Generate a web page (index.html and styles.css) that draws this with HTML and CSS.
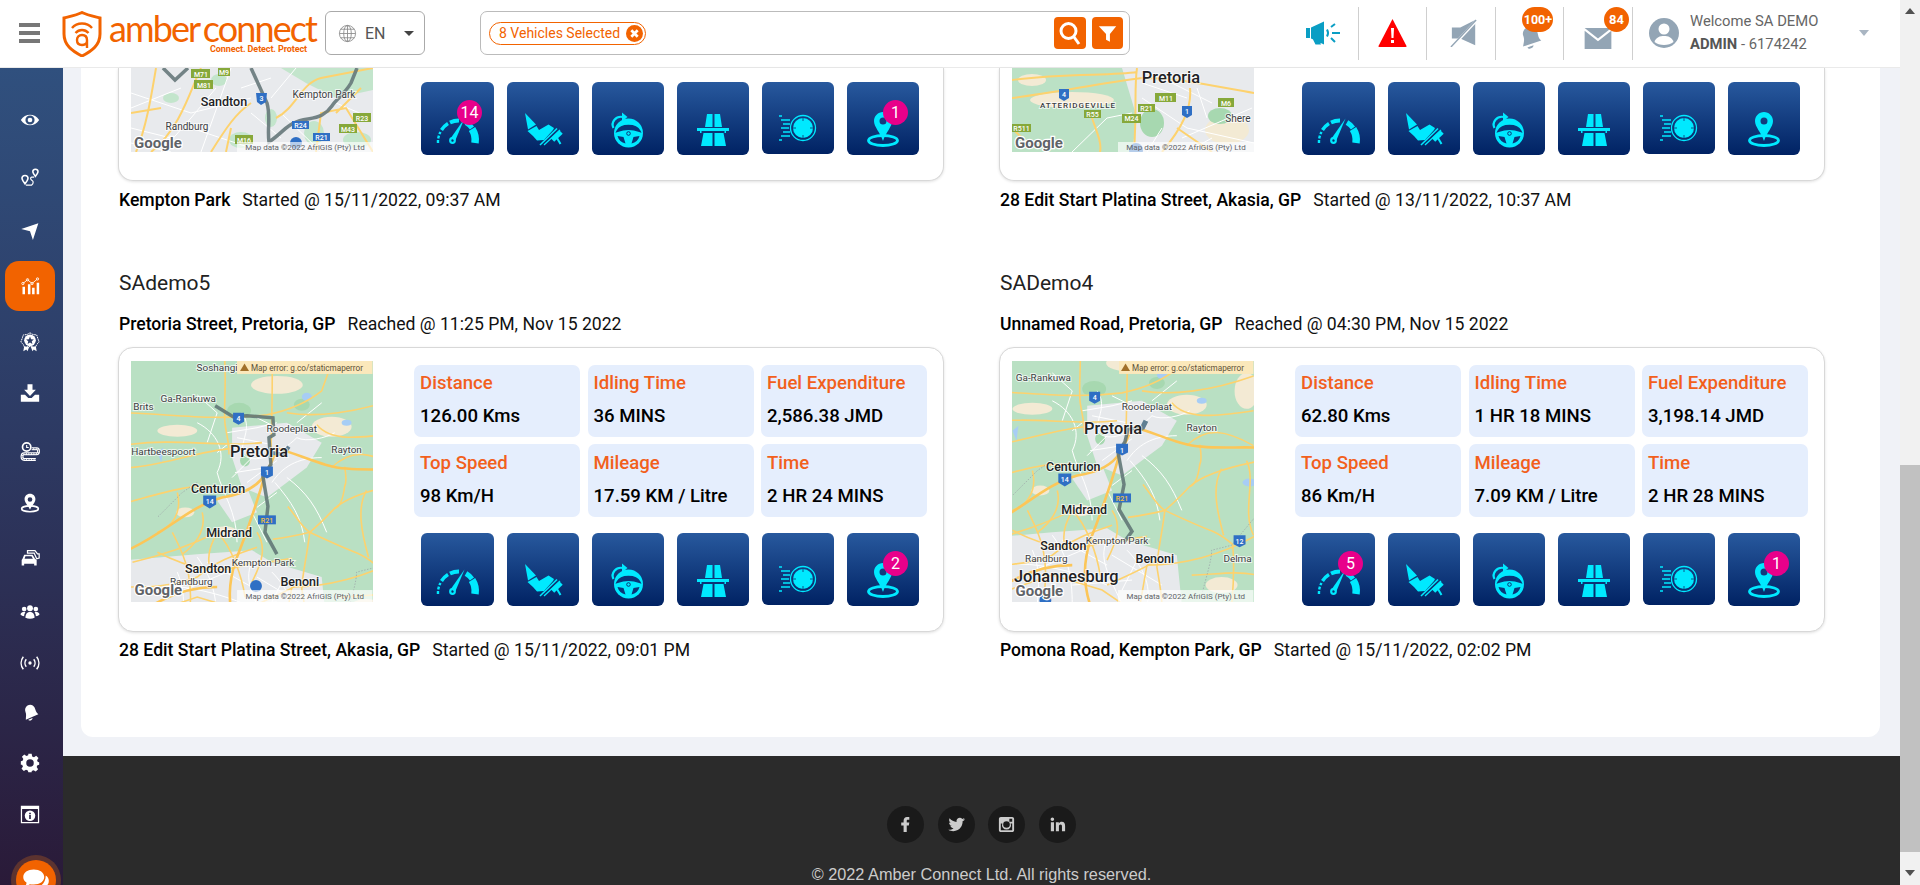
FILE: index.html
```html
<!DOCTYPE html>
<html lang="en">
<head>
<meta charset="utf-8">
<title>Amber Connect</title>
<link rel="stylesheet" href="styles.css">
</head>
<body>
<svg class="sprite" aria-hidden="true">
<defs>
<!-- trip buttons, drawn in button coordinates -->
<symbol id="t-gauge" viewBox="0 0 73 73">
<g fill="none" stroke="currentColor">
<path d="M17 61A20 20 0 0 1 19.500 50" stroke-width="2.400" stroke-dasharray="3 1.500"/>
<path d="M20.500 48A20 20 0 0 1 27 41.500" stroke-width="3.500"/>
<path d="M29 40.500A20 20 0 0 1 38 38.500" stroke-width="4"/>
<path d="M45 40.500A20 20 0 0 1 51 46" stroke-width="5"/>
<path d="M51 47A20 20 0 0 1 54 61" stroke-width="7.500"/>
<circle cx="31.500" cy="58.500" r="2.300" stroke-width="2.200"/>
</g>
<path d="M29.500 56.500L43.500 36.500L34.500 58Z" fill="currentColor"/>
</symbol>
<symbol id="t-pedal" viewBox="0 0 73 73">
<g fill="currentColor">
<path d="M18 31L29 42.500L21 47.500Z"/>
<path d="M20.500 49L29.500 44L32 48L41.500 42.500L47 46L46 48L37 58L30 58.500L26 54Z"/>
</g>
<g fill="none" stroke="currentColor">
<path d="M33 63L50 46.500" stroke-width="1.600"/>
<path d="M37 63L53 48" stroke-width="1.300"/>
<path d="M45.500 58L54 50" stroke-width="5"/>
<path d="M50 56L53.500 62" stroke-width="2"/>
</g>
</symbol>
<symbol id="t-wheel" viewBox="0 0 73 73">
<circle cx="36.500" cy="51" r="14.500" fill="currentColor"/>
<path d="M25.500 49C29 42 44 42 47.500 49C41 46.500 32 46.500 25.500 49Z" fill="#0a3578" stroke="#0a3578" stroke-width="2"/>
<path d="M25.500 54L31.500 55L33.500 61.500C29.500 60.500 26.500 58 25.500 54ZM47.500 54L41.500 55L39.500 61.500C43.500 60.500 46.500 58 47.500 54Z" fill="#0a3578"/>
<circle cx="36.500" cy="51.500" r="1.800" fill="none" stroke="#0a3578" stroke-width="1"/>
<path d="M21.500 46C18.500 40 24 33.500 31 35" fill="none" stroke="currentColor" stroke-width="2.200"/>
<path d="M30 30.500L35.500 35L30 39.500Z" fill="currentColor"/>
</symbol>
<symbol id="t-road" viewBox="0 0 73 73">
<path d="M30 32H35.500V45H28ZM37.500 32H43L45 45H37.500ZM20 46H52V49H49V51H47.500V49H24.500V51H23V49H20ZM26.500 51H35.500V64H24ZM37.500 51H46.500L49 64H37.500Z" fill="currentColor"/>
</symbol>
<symbol id="t-tyre" viewBox="0 0 73 73">
<circle cx="41" cy="46" r="12.500" fill="none" stroke="currentColor" stroke-width="1.300"/>
<circle cx="41" cy="46" r="10" fill="currentColor"/>
<g stroke="#0a3070" stroke-width=".8"><path d="M41 36v3M41 53v3M31 46h3M48 46h3"/></g>
<g stroke="currentColor" stroke-width="1.500"><path d="M17 34h3M19 38h9M21 42h7M19 46h8M21 50h7M19 54h9M17 58h3"/></g>
</symbol>
<symbol id="t-pin" viewBox="0 0 73 73">
<ellipse cx="36" cy="58.500" rx="14.500" ry="5" fill="none" stroke="currentColor" stroke-width="2.800"/>
<path fill-rule="evenodd" d="M36 30C41 30 45 34 45 39C45 45 39 50 36 59C33 50 27 45 27 39C27 34 31 30 36 30ZM36 35.500A3.500 3.500 0 1 0 36 42.500A3.500 3.500 0 1 0 36 35.500Z" fill="currentColor"/>
</symbol>
<!-- sidebar -->
<symbol id="s-eye" viewBox="0 0 24 24"><path fill-rule="evenodd" d="M1 12C6 3.500 18 3.500 23 12C18 20.500 6 20.500 1 12ZM12 6.500A5.500 5.500 0 1 0 12 17.500A5.500 5.500 0 1 0 12 6.500Z" fill="currentColor"/><circle cx="12" cy="12" r="2.800" fill="currentColor"/></symbol>
<symbol id="s-route" viewBox="0 0 24 24"><g fill="none" stroke="currentColor" stroke-width="2"><path d="M6 9C3.500 9 2 11 2.500 13C3 15 6 19 6 19C6 19 9 15 9.500 13C10 11 8.500 9 6 9Z"/><path d="M18.500 1.500C16.500 1.500 15 3 15.500 5C16 7 18.500 10 18.500 10C18.500 10 21 7 21.500 5C22 3 20.500 1.500 18.500 1.500Z"/><path d="M17 11H14C12 11.500 12.500 14 14.500 15C16.500 16 16 19 14 20.500H7" stroke-width="1.400"/></g></symbol>
<symbol id="s-nav" viewBox="0 0 24 24"><path d="M1.500 8.500L22 1.500L15.500 21.500L12 11Z" fill="currentColor"/></symbol>
<symbol id="s-chart" viewBox="0 0 24 24"><g fill="currentColor"><path d="M3 13h3v9H3zM9.500 10h3v12h-3zM14.500 14h3v8h-3zM20 8h3v14h-3z"/></g><path d="M3.500 9L9 4.500L14.500 9L21 3.500" fill="none" stroke="currentColor" stroke-width="1"/><g fill="none" stroke="currentColor"><circle cx="3.500" cy="9" r="1.400"/><circle cx="9" cy="4.500" r="1.400"/><circle cx="14.500" cy="9" r="1.400"/><circle cx="21" cy="3.500" r="1.400"/></g></symbol>
<symbol id="s-award" viewBox="0 0 24 24"><path d="M12 1L15.500 3L20 3.500L21.500 8L23 12L20 15L18 20L15 17.500H9L6 20L4 15L1 12L2.500 8L4 3.500L8.500 3Z" fill="none" stroke="currentColor" stroke-width="1.200" stroke-dasharray="2 .8"/><circle cx="12" cy="10" r="7" fill="currentColor"/><path d="M12 5.500L13.300 8.700L16.700 9L14.100 11.200L14.900 14.500L12 12.700L9.100 14.500L9.900 11.200L7.300 9L10.700 8.700Z" fill="#2f3f68"/><path d="M5 17L4 23L7.500 21L9 23L11 18ZM19 17L20 23L16.500 21L15 23L13 18Z" fill="currentColor"/></symbol>
<symbol id="s-down" viewBox="0 0 24 24"><path d="M9 1.500H15V8H19L12 15.500L5 8H9Z" fill="currentColor"/><path d="M1 14H6L10 18H14L18 14H23V22.500H1Z" fill="currentColor"/></symbol>
<symbol id="s-trail" viewBox="0 0 24 24"><circle cx="8" cy="6" r="5" fill="none" stroke="currentColor" stroke-width="2"/><path d="M8 3.500V6.500H10.500" fill="none" stroke="currentColor" stroke-width="1.300"/><path d="M14 8H20C23 8 23 14 20 14H5C1.500 14 1.500 21 5 21H19" fill="none" stroke="currentColor" stroke-width="3.500"/><path d="M14 8H20C23 8 23 14 20 14H5C1.500 14 1.500 21 5 21H19" fill="none" stroke="#2d3a60" stroke-width=".9" stroke-dasharray="2 1"/></symbol>
<symbol id="s-pin" viewBox="0 0 24 24"><ellipse cx="12" cy="19" rx="10" ry="3.500" fill="none" stroke="currentColor" stroke-width="2"/><path fill-rule="evenodd" d="M12 1C16 1 18.500 4 18.500 7.500C18.500 12 14 15 12 20C10 15 5.500 12 5.500 7.500C5.500 4 8 1 12 1ZM12 5A2.800 2.800 0 1 0 12 10.600A2.800 2.800 0 1 0 12 5Z" fill="currentColor"/></symbol>
<symbol id="s-cars" viewBox="0 0 24 24"><path d="M9 3H18L21 7H23V12L20 13L17 6H9Z" fill="none" stroke="currentColor" stroke-width="1.500"/><path fill-rule="evenodd" d="M5 8H15L18 13L20 14.500V21H17V19H5V21H2V14.500L3 13ZM6.500 10L5.500 13H15.500L13.800 10Z" fill="currentColor"/></symbol>
<symbol id="s-users" viewBox="0 0 24 24"><g fill="currentColor"><circle cx="12" cy="7.500" r="3.500"/><circle cx="5" cy="8.500" r="2.800"/><circle cx="19" cy="8.500" r="2.800"/><path d="M6.500 19C6.500 14 9 12 12 12C15 12 17.500 14 17.500 19C14 20.500 10 20.500 6.500 19Z"/><path d="M0.500 15C1 12.500 3 12 5 12C5.500 12 6 12.200 6.500 12.500C5.500 13.500 5 15 5 17C3 17 1.500 16 .5 15ZM23.500 15C23 12.500 21 12 19 12C18.500 12 18 12.200 17.500 12.500C18.500 13.500 19 15 19 17C21 17 22.500 16 23.500 15Z"/></g></symbol>
<symbol id="s-signal" viewBox="0 0 24 24"><circle cx="12" cy="12" r="2" fill="currentColor"/><g fill="none" stroke="currentColor" stroke-width="1.800"><path d="M7.500 7.500C5.500 10 5.500 14 7.500 16.500M16.500 7.500C18.500 10 18.500 14 16.500 16.500"/><path d="M4 4.500C.5 9 .5 15 4 19.500M20 4.500C23.500 9 23.500 15 20 19.500"/></g></symbol>
<symbol id="s-bell" viewBox="0 0 24 24"><path d="M9 3C12 1 16 2 17.500 5.500C19 9 19 11 22 13.500L7 20C7 16 8 14 6.500 10.500C5.500 8 6.500 4.500 9 3ZM10 20L15 18C15.500 20.500 11 22.500 10 20Z" fill="currentColor"/></symbol>
<symbol id="s-gear" viewBox="0 0 24 24"><path fill-rule="evenodd" d="M10 1H14L14.600 4.100L16.800 5L19.400 3.300L22.200 6.100L20.500 8.700L21.400 10.900L23 11V14L20.900 14.700L20 16.900L21.700 19.500L18.900 22.300L16.300 20.600L14.100 21.500L14 23H10L9.400 20.900L7.200 20L4.600 21.700L1.800 18.900L3.500 16.300L2.600 14.100L1 14V10L3.100 9.400L4 7.200L2.300 4.600L5.100 1.800L7.700 3.500L9.900 2.600ZM12 7.500A4.500 4.500 0 1 0 12 16.500A4.500 4.500 0 1 0 12 7.500Z" fill="currentColor"/></symbol>
<symbol id="s-info" viewBox="0 0 24 24"><path fill-rule="evenodd" d="M1 2H23V23H1ZM2.500 6V21.500H21.500V6Z" fill="currentColor"/><circle cx="12" cy="14" r="6.300" fill="currentColor"/><path d="M11 10.500H13V12H11ZM11 13H13V18H11Z" fill="#2b2445"/></symbol>
<!-- shared road geometry of the two full maps -->
<g id="roads">
<rect x="-40" y="-40" width="330" height="330" fill="#b9e0c3"/>
<g fill="#f3ead4">
<ellipse cx="20" cy="48" rx="20" ry="6"/><ellipse cx="175" cy="44" rx="20" ry="10"/><ellipse cx="28" cy="130" rx="9" ry="5"/><ellipse cx="68" cy="150" rx="12" ry="6"/><ellipse cx="235" cy="30" rx="12" ry="18"/><ellipse cx="30" cy="195" rx="18" ry="12"/><ellipse cx="210" cy="225" rx="16" ry="8"/><ellipse cx="120" cy="2" rx="26" ry="9"/>
</g>
<g fill="#e7e9ec">
<path d="M75 45L130 40L165 60L150 85L130 100L110 115L85 105L75 75Z"/>
<path d="M-30 178L40 172L95 168L115 180L165 195L170 245L-30 245Z"/>
<path d="M60 118L90 105L100 130L75 140Z"/>
</g>
<g fill="#a7d8b0"><ellipse cx="82" cy="28" rx="12" ry="8"/><ellipse cx="145" cy="22" rx="8" ry="6"/><ellipse cx="88" cy="78" rx="5" ry="6"/></g>
<g fill="#a7cdf5"><ellipse cx="150" cy="14" rx="5" ry="4"/><ellipse cx="190" cy="40" rx="5" ry="3"/><ellipse cx="238" cy="122" rx="7" ry="4"/><path d="M0 70L6 65L4 80Z"/></g>
<g fill="none" stroke="#fff" stroke-width="1">
<path d="M85 30C95 45 85 55 85 70C95 85 125 70 140 55C150 60 170 55 178 50"/>
<path d="M40 40C60 50 70 70 60 90C65 110 80 130 80 160"/>
<path d="M130 95C150 110 160 125 170 150"/>
<path d="M118 100C135 120 145 135 148 160"/>
<path d="M115 100C125 85 140 75 165 75"/>
<path d="M-20 205C20 200 60 210 95 225M40 175C55 195 60 215 60 245M95 180C85 200 100 220 110 245M20 190C30 215 25 230 25 245M115 190C130 205 140 225 135 245"/>
<path d="M70 50L100 45L120 40M70 62L60 70M95 75L75 95M80 55L115 62M78 90L110 85M90 100L120 78M-20 225L40 235M50 180L95 205M10 215L70 190M100 195L150 225M125 200L110 230M60 225L120 220"/>
<path d="M40 12L60 30L50 60M100 35L130 50M140 40L165 20M120 110L100 125M95 130L110 160"/>
</g>
<g fill="none" stroke="#fdd26e" stroke-width="1.600">
<path d="M-30 30C20 32 60 38 110 32C130 28 150 20 165 8L175 -20"/>
<path d="M67 -30C70 0 66 25 68 42C70 55 72 60 72 72"/>
<path d="M115 -30C116 0 115 30 114 70"/>
<path d="M130 30C160 35 200 30 242 15"/>
<path d="M-30 62C20 55 60 65 105 60"/>
<path d="M-30 85C0 85 40 68 75 66"/>
<path d="M-30 120C0 112 35 100 60 105"/>
<path d="M160 42C175 60 205 55 242 50"/>
<path d="M-25 180C10 172 40 160 60 150C75 165 85 195 88 215"/>
<path d="M15 150C25 170 40 195 30 245"/>
<path d="M0 170C30 185 60 195 95 180"/>
<path d="M100 150C110 165 105 180 95 200"/>
<path d="M116 157C130 155 145 152 153 150C165 140 172 132 178 126C190 115 215 107 245 101"/>
<path d="M153 150C150 175 145 195 145 207C148 225 150 235 150 245"/>
<path d="M188 84C190 95 190 100 188 104C186 120 182 125 178 126"/>
<path d="M131 124C140 135 145 145 153 150C170 158 185 165 201 171C210 175 216 180 221 184C223 205 222 225 220 245"/>
<path d="M135 205C170 205 210 195 245 175"/>
<path d="M95 225C115 215 130 210 145 200"/>
<path d="M175 85C195 65 215 70 242 85"/>
<path d="M235 100C245 120 230 150 242 175"/>
<path d="M-30 205C-10 205 15 205 40 195C60 178 80 172 100 165"/>
<path d="M-10 232L40 215L90 230L112 245"/>
<path d="M100 182L135 176M135 205L128 245"/>
<path d="M20 110C25 130 15 145 0 150M45 130C50 150 35 165 25 172M60 150C55 160 50 170 52 182"/>
<path d="M210 108C200 125 205 150 212 175M180 215C200 215 225 210 245 215"/>
</g>
<g fill="none" stroke="#fcc658" stroke-width="2.600">
<path d="M-30 168C10 150 30 125 65 115C85 112 100 105 108 92C115 80 118 72 120 66"/>
<path d="M108 92C100 120 90 150 78 180C72 200 70 220 78 245"/>
<path d="M122 66C150 75 170 85 190 86C210 88 230 86 245 87"/>
<path d="M-30 242C0 215 30 205 60 205"/>
</g>
<path d="M40 100L25 110L0 135" fill="none" stroke="#9aa0a6" stroke-width=".7" stroke-dasharray="1.500 1.500"/>
<path d="M190 235C195 215 200 200 200 190L220 185L245 155" fill="none" stroke="#9aa0a6" stroke-width=".7" stroke-dasharray="1.500 1.500"/>
</g>
<!-- header -->
<symbol id="h-mega" viewBox="0 0 36 24"><path d="M0 7H4V17H0ZM5 6.500L18 .5V23.500L5 17.500ZM7 18.500H13L15 23.500H9.500Z" fill="currentColor"/><g stroke="currentColor" stroke-width="2" fill="none"><path d="M21 8.500C22.500 11 22.500 13 21 15.500"/><path d="M25 6L29 3M26 12H34M25 17L29 21"/></g></symbol>
</defs>
</svg>

<div class="app">
<div class="page">
<header class="topbar">
<div class="burger"><i></i><i></i><i></i></div>
<div class="logo">
<svg class="logo-mark" viewBox="0 0 40 46"><path d="M2 7C10 5 15 4 20 1.500C25 4 30 5 38 7V23C38 34 30 40 20 45C10 40 2 34 2 23Z" fill="none" stroke="#f26300" stroke-width="3"/><g fill="none" stroke="#f26300" stroke-width="2.400"><path d="M10 17C15 11 25 11 30 17"/><path d="M13.500 22C17 18 23 18 26.500 22"/><path d="M25 37V29C25 26 23 24 20 24C17 24 15 26 15 29C15 32 17 34 20 34C22 34 25 33 25 30"/></g></svg>
<div class="logo-text">
<span class="logo-name">amber connect</span>
<span class="logo-tag">Connect. Detect. Protect</span>
</div>
</div>
<div class="lang">
<svg class="globe" viewBox="0 0 20 20"><g fill="none" stroke="#8a8a8a" stroke-width=".9"><circle cx="10" cy="10" r="8.500"/><ellipse cx="10" cy="10" rx="4" ry="8.500"/><path d="M10 1.500V18.500M1.500 10H18.500M2.800 5.500H17.200M2.800 14.500H17.200"/></g></svg>
<span class="lang-code">EN</span>
<i class="caret caret--dark"></i>
</div>
<div class="search">
<div class="chip"><span>8 Vehicles Selected</span>
<svg class="chip-x" viewBox="0 0 16 16"><circle cx="8" cy="8" r="8" fill="#f26300"/><path d="M5 5L11 11M11 5L5 11" stroke="#fff" stroke-width="2.600"/></svg></div>
<div class="search-btns">
<div class="sbtn"><svg viewBox="0 0 32 32"><circle cx="14.500" cy="14" r="7.500" fill="none" stroke="#fff" stroke-width="3"/><path d="M20 20L25 27" stroke="#fff" stroke-width="3"/></svg></div>
<div class="sbtn sbtn--last"><svg viewBox="0 0 32 32"><path d="M7 9H25L18.500 17V25L14.500 23V17Z" fill="#fff"/></svg></div>
</div>
</div>
<div class="hcells">
<div class="hcell hcell--blue"><svg class="hico-mega"><use href="#h-mega"/></svg></div>
<div class="hcell"><svg class="hico hico--alert" viewBox="0 0 30 30"><path d="M15 1L29 28Q29.500 29 28 29H2Q.5 29 1 28Z" fill="#f00"/><path d="M13.500 10H16.500L16 20H14ZM13.500 22H16.500V25H13.500Z" fill="#fff"/></svg></div>
<div class="hcell hcell--shift"><svg class="hico" viewBox="0 0 30 30"><path d="M2 9H11L27 1V28L11 21H2Z" fill="#93a5b5"/><path d="M1 31L29 1" stroke="#fff" stroke-width="3"/><path d="M1 30L28 1" stroke="#93a5b5" stroke-width="1.500"/></svg></div>
<div class="hcell"><svg class="hico hico--low" viewBox="0 0 30 30"><path d="M11 4C15 1 21 3 23 8C25 13 24 16 28 19L7 26C8 20 9 18 7 13C6 10 8 6 11 4ZM12 27L19 24.500C19.500 28 13.500 30 12 27Z" fill="#93a5b5"/></svg><b class="hbadge hbadge--wide">100+</b></div>
<div class="hcell"><svg class="hico hico--mail" viewBox="0 0 28 22"><path d="M0 0H28L14 11ZM0 3L14 14L28 3V22H0Z" fill="#93a5b5"/></svg><b class="hbadge">84</b></div>
</div>
<div class="user">
<svg class="user-ico" viewBox="0 0 30 30"><circle cx="15" cy="15" r="15" fill="#93a5b5"/><circle cx="15" cy="11" r="5.500" fill="#fff"/><path d="M5.500 24C7 19 11 18 15 18C19 18 23 19 24.500 24C20 28 10 28 5.500 24Z" fill="#fff"/></svg>
<div class="user-text"><div class="user-hello">Welcome SA DEMO</div><div class="user-id"><b>ADMIN</b> - 6174242</div></div>
<i class="caret caret--soft"></i>
</div>
</header>

<div class="layout">
<nav class="sidebar">
<div class="side-item"><svg><use href="#s-eye"/></svg></div>
<div class="side-item"><svg><use href="#s-route"/></svg></div>
<div class="side-item"><svg><use href="#s-nav"/></svg></div>
<div class="side-item side-item--on"><svg><use href="#s-chart"/></svg></div>
<div class="side-item"><svg><use href="#s-award"/></svg></div>
<div class="side-item"><svg><use href="#s-down"/></svg></div>
<div class="side-item"><svg><use href="#s-trail"/></svg></div>
<div class="side-item"><svg><use href="#s-pin"/></svg></div>
<div class="side-item"><svg><use href="#s-cars"/></svg></div>
<div class="side-item"><svg><use href="#s-users"/></svg></div>
<div class="side-item"><svg><use href="#s-signal"/></svg></div>
<div class="side-item"><svg><use href="#s-bell"/></svg></div>
<div class="side-item"><svg><use href="#s-gear"/></svg></div>
<div class="side-item"><svg><use href="#s-info"/></svg></div>
</nav>

<div class="main">
<div class="content">
<section class="panel">
<div class="trips">

<article class="trip">
<div class="card card--cut">
<svg class="map map--cut" viewBox="0 0 242 84">
<rect width="242" height="84" fill="#e8eaed"/>
<g fill="#c3e5cc"><path d="M150 0H242V22L205 30L175 15Z"/><ellipse cx="110" cy="72" rx="12" ry="8"/><ellipse cx="140" cy="50" rx="6" ry="9"/><ellipse cx="183" cy="65" rx="10" ry="12"/><ellipse cx="226" cy="72" rx="14" ry="8"/><ellipse cx="40" cy="30" rx="8" ry="5"/><ellipse cx="88" cy="12" rx="8" ry="6"/></g>
<g fill="none" stroke="#fff" stroke-width="1"><path d="M0 25L60 45L120 30M30 84L60 50L85 20M100 0L70 84M150 45L190 84M0 60L40 70M165 0L140 30M205 35L240 50M0 40L50 20M40 84L0 75M120 45L150 70M110 20L140 10M60 60L120 80M170 30L200 25"/></g>
<g fill="none" stroke="#fdd26e" stroke-width="2"><path d="M25 0C20 30 15 60 5 84M70 0C60 20 50 60 20 84M80 84C95 60 105 45 120 35M145 50C165 40 170 15 190 10L242 0M185 84L190 45L215 40L242 84M230 20L205 45M0 45L30 40M95 84L100 60"/></g>
<path d="M32 0L44 12L57 0M120 0L136 35C140 50 136 60 138 74C150 66 155 58 163 55C172 50 182 52 191 47C200 42 200 38 204 34C212 26 216 22 220 15L226 0" fill="none" stroke="#66787a" stroke-width="3.500" stroke-opacity=".9"/>
<g class="shield-g"><rect x="60" y="1" width="19" height="9"/><rect x="87" y="0" width="12" height="8"/><rect x="63" y="12" width="19" height="9"/><rect x="222" y="45" width="18" height="9"/><rect x="208" y="56" width="18" height="9"/><rect x="104" y="67" width="18" height="9"/></g>
<g class="shield-b"><path d="M125 25H136L135 34L130 37L126 34Z"/><rect x="161" y="53" width="17" height="8"/><rect x="182" y="65" width="17" height="8"/><circle cx="165" cy="75" r="6"/></g>
<text class="ms" x="70" y="9">M71</text><text class="ms" x="93" y="7">M9</text><text class="ms" x="73" y="20">M81</text><text class="ms" x="231" y="53">R23</text><text class="ms" x="217" y="64">M43</text><text class="ms" x="113" y="75">M16</text><text class="ms" x="169.500" y="60">R24</text><text class="ms" x="190.500" y="72">R21</text>
<text class="ms" x="130.500" y="33">3</text>
<text class="ml ml--mid" x="93" y="38">Sandton</text><text class="ml" x="193" y="30">Kempton Park</text><text class="ml" x="56" y="62">Randburg</text>
<text class="gg" x="27" y="80">Google</text>
<rect x="106" y="74" width="136" height="10" fill="#fff" fill-opacity=".65"/><text class="md" x="174" y="82">Map data ©2022 AfriGIS (Pty) Ltd</text>
</svg>
<div class="info info--cut">
<div class="btns">
<div class="tbtn"><svg><use href="#t-gauge"/></svg><b class="count">14</b></div>
<div class="tbtn"><svg><use href="#t-pedal"/></svg></div>
<div class="tbtn"><svg><use href="#t-wheel"/></svg></div>
<div class="tbtn"><svg><use href="#t-road"/></svg></div>
<div class="tbtn tbtn--short"><svg><use href="#t-tyre"/></svg></div>
<div class="tbtn"><svg><use href="#t-pin"/></svg><b class="count">1</b></div>
</div>
</div>
</div>
<p class="foot"><b>Kempton Park</b><span>Started @ 15/11/2022, 09:37 AM</span></p>
</article>

<article class="trip">
<div class="card card--cut">
<svg class="map map--cut" viewBox="0 0 242 84">
<rect width="242" height="84" fill="#bbe1c5"/>
<path d="M110 0H242V84H120L125 50Z" fill="#e8eaed"/>
<g fill="#f3ead4"><ellipse cx="60" cy="32" rx="42" ry="8"/><ellipse cx="215" cy="62" rx="22" ry="14"/><ellipse cx="20" cy="12" rx="14" ry="6"/></g>
<g fill="#a7d8b0"><ellipse cx="140" cy="55" rx="12" ry="14"/><ellipse cx="208" cy="48" rx="12" ry="8"/></g>
<g fill="none" stroke="#fff" stroke-width="1"><path d="M60 84L95 50L120 45M130 30L175 60L242 75M150 60L135 84M185 20L195 50M175 84L200 70M130 15L175 30M140 5L200 35M170 70L240 40"/></g>
<g fill="none" stroke="#fdd26e" stroke-width="2"><path d="M0 30C40 25 90 15 130 10C170 10 210 20 242 25"/><path d="M0 12C50 5 100 8 125 4M125 0C122 20 125 40 122 84M178 20C180 40 170 60 150 84M200 84L165 60M0 60L15 75M80 50C85 65 90 75 88 84"/></g>
<g class="shield-g"><rect x="143" y="25" width="21" height="9"/><rect x="126" y="36" width="17" height="8"/><rect x="72" y="42" width="17" height="8"/><rect x="110" y="46" width="19" height="9"/><rect x="0" y="56" width="19" height="8"/><rect x="206" y="30" width="16" height="9"/></g>
<g class="shield-b"><path d="M47 21H57L57 30L52 33L47 30Z"/><path d="M170 38H180L180 47L175 50L170 47Z"/><circle cx="124" cy="82" r="7"/></g>
<text class="ms" x="154" y="33">M11</text><text class="ms" x="134.500" y="43">R21</text><text class="ms" x="80.500" y="49">R55</text><text class="ms" x="119.500" y="53">M24</text><text class="ms" x="9.500" y="63">R511</text><text class="ms" x="214" y="38">M6</text>
<text class="ms" x="52" y="29">4</text><text class="ms" x="175" y="46">1</text>
<text class="ml ml--big" x="159" y="15">Pretoria</text><text class="ml ml--caps" x="66" y="40">ATTERIDGEVILLE</text><text class="ml" x="226" y="54">Shere</text>
<text class="gg" x="27" y="80">Google</text>
<rect x="106" y="74" width="136" height="10" fill="#fff" fill-opacity=".65"/><text class="md" x="174" y="82">Map data ©2022 AfriGIS (Pty) Ltd</text>
</svg>
<div class="info info--cut">
<div class="btns">
<div class="tbtn"><svg><use href="#t-gauge"/></svg></div>
<div class="tbtn"><svg><use href="#t-pedal"/></svg></div>
<div class="tbtn"><svg><use href="#t-wheel"/></svg></div>
<div class="tbtn"><svg><use href="#t-road"/></svg></div>
<div class="tbtn tbtn--short"><svg><use href="#t-tyre"/></svg></div>
<div class="tbtn"><svg><use href="#t-pin"/></svg></div>
</div>
</div>
</div>
<p class="foot"><b>28 Edit Start Platina Street, Akasia, GP</b><span>Started @ 13/11/2022, 10:37 AM</span></p>
</article>

<article class="trip trip--next">
<h2 class="vehicle">SAdemo5</h2>
<p class="head"><b>Pretoria Street, Pretoria, GP</b><span>Reached @ 11:25 PM, Nov 15 2022</span></p>
<div class="card">
<svg class="map" viewBox="0 0 242 242">
<use href="#roads" transform="translate(26 22)"/>
<path d="M84 45L102 56L116 55L142 57L143 74L138 77L140 104L132 116L137 146L134 172L146 194" fill="none" stroke="#5f7474" stroke-width="3.500" stroke-opacity=".88"/>
<path d="M158 86L152 94L140 92" fill="none" stroke="#5f7f93" stroke-width="4"/>
<g class="shield-b"><path d="M102 52H113V61L107.500 64L102 61Z"/><path d="M130 106H142V115L136 118L130 115Z"/><path d="M72 135H85V144L78.500 148L72 144Z"/><rect x="127" y="155" width="18" height="9"/><circle cx="125" cy="226" r="6"/></g>
<text class="ms" x="107.500" y="60">4</text><text class="ms" x="136" y="114">1</text><text class="ms" x="78.500" y="144">14</text><text class="ms ms--o" x="136" y="163">R21</text>
<text class="ml" x="57" y="41">Ga-Rankuwa</text><text class="ml" x="12" y="49">Brits</text><text class="ml" x="161" y="71">Roodeplaat</text><text class="ml" x="32" y="94">Hartbeespoort</text><text class="ml" x="216" y="92">Rayton</text><text class="ml" x="86" y="10">Soshangi</text>
<text class="ml ml--big" x="128" y="96">Pretoria</text><text class="ml ml--mid" x="87" y="133">Centurion</text><text class="ml ml--mid" x="98" y="177">Midrand</text><text class="ml ml--mid" x="77" y="213">Sandton</text><text class="ml" x="132" y="206">Kempton Park</text><text class="ml" x="60" y="225">Randburg</text><text class="ml ml--mid" x="169" y="226">Benoni</text>
<text class="gg" x="27" y="235">Google</text>
<rect x="106" y="0" width="136" height="13" fill="#fbe8bb"/><path d="M109 10L113.500 2.500L118 10Z" fill="#a1702a"/><text class="me" x="120" y="10">Map error: g.co/staticmaperror</text>
<rect x="106" y="230" width="136" height="12" fill="#fff" fill-opacity=".7"/><text class="md" x="174" y="239">Map data ©2022 AfriGIS (Pty) Ltd</text>
</svg>
<div class="info">
<div class="stats">
<div class="stat"><span>Distance</span><strong>126.00 Kms</strong></div>
<div class="stat"><span>Idling Time</span><strong>36 MINS</strong></div>
<div class="stat"><span>Fuel Expenditure</span><strong>2,586.38 JMD</strong></div>
<div class="stat"><span>Top Speed</span><strong>98 Km/H</strong></div>
<div class="stat"><span>Mileage</span><strong>17.59 KM / Litre</strong></div>
<div class="stat"><span>Time</span><strong>2 HR 24 MINS</strong></div>
</div>
<div class="btns">
<div class="tbtn"><svg><use href="#t-gauge"/></svg></div>
<div class="tbtn"><svg><use href="#t-pedal"/></svg></div>
<div class="tbtn"><svg><use href="#t-wheel"/></svg></div>
<div class="tbtn"><svg><use href="#t-road"/></svg></div>
<div class="tbtn tbtn--short"><svg><use href="#t-tyre"/></svg></div>
<div class="tbtn"><svg><use href="#t-pin"/></svg><b class="count">2</b></div>
</div>
</div>
</div>
<p class="foot"><b>28 Edit Start Platina Street, Akasia, GP</b><span>Started @ 15/11/2022, 09:01 PM</span></p>
</article>

<article class="trip trip--next">
<h2 class="vehicle">SADemo4</h2>
<p class="head"><b>Unnamed Road, Pretoria, GP</b><span>Reached @ 04:30 PM, Nov 15 2022</span></p>
<div class="card">
<svg class="map" viewBox="0 0 242 242">
<use href="#roads"/>
<path d="M134 61L130 68L116 68L113 81L106 92L112 124L107 149L120 171L112 182" fill="none" stroke="#5f7474" stroke-width="3.500" stroke-opacity=".88"/>
<path d="M134 60L130 68" fill="none" stroke="#5f7f93" stroke-width="5"/>
<g class="shield-b"><path d="M77 31H88V40L82.500 43L77 40Z"/><path d="M104 83H116V92L110 95L104 92Z"/><path d="M46 113H59V122L52.500 126L46 122Z"/><rect x="101" y="133" width="18" height="9"/><path d="M222 175H234V184L228 187L222 184Z"/><circle cx="33" cy="240" r="6"/></g>
<text class="ms" x="82.500" y="39">4</text><text class="ms" x="110" y="92">1</text><text class="ms" x="52.500" y="122">14</text><text class="ms ms--o" x="110" y="141">R21</text><text class="ms" x="228" y="184">12</text>
<text class="ml" x="31" y="20">Ga-Rankuwa</text><text class="ml" x="135" y="49">Roodeplaat</text><text class="ml" x="190" y="70">Rayton</text>
<text class="ml ml--big" x="101" y="73">Pretoria</text><text class="ml ml--mid" x="61" y="110">Centurion</text><text class="ml ml--mid" x="72" y="154">Midrand</text><text class="ml ml--mid" x="51" y="190">Sandton</text><text class="ml" x="105" y="184">Kempton Park</text><text class="ml" x="34" y="202">Randburg</text><text class="ml ml--mid" x="143" y="203">Benoni</text><text class="ml" x="226" y="202">Delma</text><text class="ml ml--big" x="54" y="222">Johannesburg</text>
<text class="gg" x="27" y="236">Google</text>
<rect x="107" y="0" width="135" height="13" fill="#fbe8bb"/><path d="M109 10L113.500 2.500L118 10Z" fill="#a1702a"/><text class="me" x="120" y="10">Map error: g.co/staticmaperror</text>
<rect x="106" y="230" width="136" height="12" fill="#fff" fill-opacity=".7"/><text class="md" x="174" y="239">Map data ©2022 AfriGIS (Pty) Ltd</text>
</svg>
<div class="info">
<div class="stats">
<div class="stat"><span>Distance</span><strong>62.80 Kms</strong></div>
<div class="stat"><span>Idling Time</span><strong>1 HR 18 MINS</strong></div>
<div class="stat"><span>Fuel Expenditure</span><strong>3,198.14 JMD</strong></div>
<div class="stat"><span>Top Speed</span><strong>86 Km/H</strong></div>
<div class="stat"><span>Mileage</span><strong>7.09 KM / Litre</strong></div>
<div class="stat"><span>Time</span><strong>2 HR 28 MINS</strong></div>
</div>
<div class="btns">
<div class="tbtn"><svg><use href="#t-gauge"/></svg><b class="count">5</b></div>
<div class="tbtn"><svg><use href="#t-pedal"/></svg></div>
<div class="tbtn"><svg><use href="#t-wheel"/></svg></div>
<div class="tbtn"><svg><use href="#t-road"/></svg></div>
<div class="tbtn tbtn--short"><svg><use href="#t-tyre"/></svg></div>
<div class="tbtn"><svg><use href="#t-pin"/></svg><b class="count">1</b></div>
</div>
</div>
</div>
<p class="foot"><b>Pomona Road, Kempton Park, GP</b><span>Started @ 15/11/2022, 02:02 PM</span></p>
</article>

</div>
</section>
</div>
<footer class="footer">
<div class="social">
<a class="soc"><svg viewBox="0 0 20 20"><path d="M8 18V11H5.500V8H8V6C8 3.500 9.500 2 11.500 2H14V5H12.500C11.500 5 11.300 5.500 11.300 6.200V8H14L13.500 11H11.300V18Z" fill="#ccc"/></svg></a>
<a class="soc"><svg viewBox="0 0 20 20"><path d="M19 4.500C18.300 4.800 17.600 5 16.900 5.100C17.600 4.600 18.200 4 18.400 3.200C17.700 3.600 17 3.900 16.100 4.100C14.700 2.600 12.400 2.600 11 4C10.100 4.900 9.800 6.100 10.100 7.300C7.200 7.100 4.500 5.700 2.700 3.400C1.800 5 2.200 7.100 3.800 8.200C3.200 8.200 2.700 8 2.200 7.800C2.200 9.500 3.400 11 5.100 11.400C4.600 11.500 4 11.500 3.500 11.400C4 12.900 5.300 13.900 6.900 13.900C5.300 15.200 3.300 15.700 1.400 15.500C6 18.400 12 17 14.900 12.400C16 10.700 16.500 8.700 16.400 6.700C17.500 6.200 18.400 5.400 19 4.500Z" fill="#ccc"/></svg></a>
<a class="soc"><svg viewBox="0 0 20 20"><path fill-rule="evenodd" d="M4 2H16C17.100 2 18 2.900 18 4V16C18 17.100 17.100 18 16 18H4C2.900 18 2 17.100 2 16V4C2 2.900 2.900 2 4 2ZM13 4V7H16V4ZM10 6.500A3.500 3.500 0 1 0 10 13.500A3.500 3.500 0 1 0 10 6.500ZM4 9V16H16V9H14.400A4.700 4.700 0 1 1 5.600 9Z" fill="#ccc"/></svg></a>
<a class="soc"><svg viewBox="0 0 20 20"><path d="M3 7.500H6.300V17H3ZM4.600 2.500A1.900 1.900 0 1 1 4.600 6.300A1.900 1.900 0 1 1 4.600 2.500ZM8.300 7.500H11.400V8.900C12 7.900 13.100 7.200 14.500 7.200C17.200 7.200 18 9 18 11.500V17H14.700V12.100C14.700 10.900 14.400 10 13.200 10C12 10 11.500 10.900 11.500 12.100V17H8.300Z" fill="#ccc"/></svg></a>
</div>
<p class="copy">© 2022 Amber Connect Ltd. All rights reserved.</p>
</footer>
</div>
</div>
</div>
<aside class="scrollbar">
<div class="sb-btn"><i class="sb-up"></i></div>
<div class="sb-gap"></div>
<div class="sb-thumb"></div>
<div class="sb-btn sb-btn--end"><i class="sb-down"></i></div>
</aside>
<div class="chat"><svg viewBox="0 0 40 40"><path d="M17 6C25 6 31 10 31 16C31 22 25 26 17 26C15 26 14 26 12 25.500L6 29L7.500 23.500C4.500 22 3 19 3 16C3 10 9 6 17 6Z" fill="#fff"/><path d="M33 14C36 16 37.500 19 37 22C37 25 35 27 33 29L34 34L28 31C25 32 21 31.500 19 30C26 30 33 24 33 14Z" fill="#fff"/></svg></div>
</div>
</body>
</html>
```

FILE: styles.css
```css
* { box-sizing: border-box; }
html, body { margin: 0; padding: 0; height: 885px; overflow: hidden; }
body { font-family: Roboto, "Liberation Sans", sans-serif; color: #000; background: #f0f2f7; }
p, h2 { margin: 0; }
.sprite { position: absolute; width: 0; height: 0; }

.app { position: relative; display: flex; height: 885px; overflow: hidden; }
.page { flex: 1; min-width: 0; display: flex; flex-direction: column; }

/* Scrollbar */
.scrollbar { width: 20px; display: flex; flex-direction: column; background: #f1f1f1; }
.sb-btn { height: 22px; display: flex; align-items: center; justify-content: center; }
.sb-btn--end { flex: 1; align-items: flex-end; padding-bottom: 9px; }
.sb-gap { height: 443px; }
.sb-thumb { height: 387px; background: #c1c1c1; }
.sb-up, .sb-down { width: 0; height: 0; border-left: 5px solid transparent; border-right: 5px solid transparent; }
.sb-up { border-bottom: 6px solid #505050; }
.sb-down { border-top: 6px solid #505050; }

/* Top bar */
.topbar { height: 68px; flex: none; display: flex; align-items: center; background: #fff; border-bottom: 1px solid #eaeaea; padding: 0 0 1px 19px; }
.burger { width: 21px; display: flex; flex-direction: column; gap: 4px; }
.burger i { height: 4px; background: #777; }
.logo { margin-left: 22px; width: 245px; display: flex; align-items: center; }
.logo-mark { width: 40px; height: 46px; flex: none; margin-top: 1px; }
.logo-text { margin-left: 7px; width: 198px; display: flex; flex-direction: column; }
.logo-name { font-family: Lato, sans-serif; font-size: 36px; line-height: 32px; color: #f26300; letter-spacing: -1.9px; white-space: nowrap; word-spacing: -3px; }
.logo-tag { font-size: 9px; line-height: 11px; font-weight: 700; color: #f26300; text-align: right; white-space: nowrap; letter-spacing: -.1px; }
.lang { margin-left: 18px; width: 100px; height: 44px; border: 1px solid #aaa; border-radius: 6px; display: flex; align-items: center; padding-left: 12px; }
.globe { width: 19px; height: 19px; flex: none; }
.lang-code { margin-left: 8px; font-size: 16px; color: #555; }
.caret { width: 0; height: 0; border-left: 5px solid transparent; border-right: 5px solid transparent; }
.caret--dark { margin-left: 18px; border-top: 5px solid #444; }
.caret--soft { margin-left: auto; margin-right: 31px; border-top: 6px solid #a9b5c2; }
.search { margin-left: 55px; width: 650px; height: 44px; border: 1px solid #bbb; border-radius: 7px; display: flex; align-items: center; justify-content: space-between; padding: 0 6px 0 8px; }
.chip { height: 23px; width: 157px; border: 1.5px solid #f26300; border-radius: 12px; display: flex; align-items: center; justify-content: space-between; padding: 0 2px 0 9px; font-size: 14px; color: #f26300; white-space: nowrap; }
.chip-x { width: 17px; height: 17px; flex: none; }
.search-btns { display: flex; gap: 6px; }
.sbtn { width: 32px; height: 32px; background: #f26300; border-radius: 4px; display: flex; }
.sbtn svg { width: 32px; height: 32px; }
.sbtn--last { width: 31px; }
.hcells { margin-left: auto; display: flex; }
.hcell { position: relative; width: 68.600px; height: 53px; border-right: 1px solid #cfcfcf; display: flex; align-items: center; justify-content: center; }
.hcell--blue { color: #0a9ec4; }
.hcell--shift { padding-left: 6px; }
.hico-mega { width: 36px; height: 24px; }
.hico { width: 28px; height: 28px; }
.hico--alert { width: 31px; height: 30px; }
.hico--low { margin-top: 8px; width: 26px; height: 26px; }
.hico--mail { margin-top: 10px; width: 28px; height: 21px; }
.hbadge { position: absolute; top: 0; right: 3px; min-width: 25px; height: 25px; padding: 0 3px; border-radius: 13px; background: #f26300; color: #fff; font-size: 13px; line-height: 25px; text-align: center; font-weight: 700; }
.hbadge--wide { right: 10px; width: 31px; padding: 0; font-size: 12.500px; }
.user { flex: none; width: 267px; display: flex; align-items: center; padding-left: 16px; }
.user-ico { width: 30px; height: 30px; flex: none; }
.user-text { margin-left: 11px; font-size: 14.800px; line-height: 23.500px; color: #666; white-space: nowrap; }
.user-id b { font-weight: 700; color: #555; }

/* Sidebar */
.layout { flex: 1; min-height: 0; display: flex; }
.sidebar { width: 63px; flex: none; padding-top: 27px; display: flex; flex-direction: column; background: linear-gradient(180deg, #30507e 0%, #2d3a63 45%, #2a1a38 100%); }
.side-item { width: 50px; height: 50px; flex: none; margin-left: 5px; border-radius: 14px; display: flex; align-items: center; justify-content: center; color: #fff; }
.side-item svg { width: 20px; height: 20px; }
.side-item--on { background: #f26300; }
.side-item:nth-child(2) { margin-top: 8px; }
.side-item:nth-child(3) { margin-top: 4px; }
.side-item:nth-child(4) { margin-top: 4px; }
.side-item:nth-child(5) { margin-top: 6px; }
.side-item:nth-child(6) { margin-top: 1px; }
.side-item:nth-child(7) { margin-top: 9px; }
.side-item:nth-child(8) { margin-top: 1px; }
.side-item:nth-child(9) { margin-top: 5px; }
.side-item:nth-child(10) { margin-top: 4px; }
.side-item:nth-child(11) { margin-top: 1px; }
.side-item:nth-child(12) { margin-top: 0; }
.side-item:nth-child(13) { margin-top: 0; }
.side-item:nth-child(14) { margin-top: 1px; }
.chat { position: absolute; left: 11px; top: 855px; width: 50px; height: 50px; border-radius: 50%; background: #5c3330; display: flex; align-items: center; justify-content: center; }
.chat svg { width: 40px; height: 40px; border-radius: 50%; background: #f26300; padding: 5px; }

/* Main area */
.main { flex: 1; min-width: 0; display: flex; flex-direction: column; }
.content { flex: 1; min-height: 0; padding: 0 20px 19px 18px; background: #f0f2f7; }
.panel { height: 100%; background: #fff; border-radius: 0 0 12px 12px; padding: 0 37px; }
.trips { display: grid; grid-template-columns: 826px 826px; column-gap: 55px; }
.trip--next { margin-top: 58px; }
.vehicle { font-size: 21px; line-height: 26px; font-weight: 400; color: #222; padding-left: 1px; }
.head { margin-top: 17px; padding-left: 1px; font-size: 17.600px; line-height: 23px; margin-bottom: 11px; white-space: nowrap; }
.foot { margin-top: 8px; padding-left: 1px; font-size: 17.600px; line-height: 23px; white-space: nowrap; }
.trip--next .foot { margin-top: 7px; }
.head b, .foot b { font-weight: 500; color: #000; margin-right: 12px; }
.head span, .foot span { color: #111; }

.card { display: flex; height: 285px; background: #fff; border: 1px solid #d8d8d8; border-radius: 15px; box-shadow: 0 1px 3px rgba(0,0,0,.12); padding: 13px 0 0 12px; }
.card--cut { height: 113px; border-top: 0; border-radius: 0 0 15px 15px; padding-top: 0; }
.map { width: 242px; height: 241px; flex: none; display: block; }
.map--cut { height: 84px; }
.info { margin-left: 41px; width: 513px; padding-top: 4px; }
.info--cut { padding-top: 14px; }
.stats { display: grid; grid-template-columns: 166px 166px 166px; column-gap: 7.500px; row-gap: 7px; }
.stat { height: 72px; background: #e5eefd; border-radius: 7px; padding: 6px 6px 0; display: flex; flex-direction: column; }
.stat:nth-child(n+4) { height: 73px; padding-top: 7px; }
.stat span { font-size: 18.600px; line-height: 24px; font-weight: 500; color: #f2601c; white-space: nowrap; }
.stat strong { margin-top: 9px; font-size: 18.600px; line-height: 24px; font-weight: 500; color: #000; white-space: nowrap; }
.btns { display: flex; gap: 13px; margin-top: 16px; padding-left: 7px; }
.info--cut .btns { margin-top: 0; }
.tbtn { position: relative; width: 72px; height: 73px; flex: none; border-radius: 6px; color: #00e9ff; background: linear-gradient(180deg, #28599e 0%, #002263 100%); }
.tbtn:first-child { width: 73px; }
.tbtn--short { height: 72px; }
.tbtn svg { display: block; width: 73px; height: 73px; }
.count { position: absolute; top: 18px; left: 36px; width: 25px; height: 25px; border-radius: 50%; background: #e8008a; color: #fff; font-size: 16px; font-weight: 400; line-height: 25px; text-align: center; }

/* Map details */
.ml { font-size: 10px; fill: #3c4043; text-anchor: middle; stroke: #fff; stroke-width: 2px; paint-order: stroke; stroke-opacity: .7; }
.ml--mid { font-size: 12.500px; font-weight: 500; fill: #202124; }
.ml--big { font-size: 16.400px; font-weight: 500; fill: #202124; }
.ml--caps { font-size: 8px; letter-spacing: 1px; font-weight: 500; }
.ms { font-size: 7px; font-weight: 500; fill: #fff; text-anchor: middle; }
.ms--o { fill: #f8c33b; }
.shield-g { fill: #86a83a; }
.shield-b { fill: #2f6fc4; }
.gg { font-size: 15px; font-weight: 700; fill: #5f6368; text-anchor: middle; stroke: #fff; stroke-width: 2.500px; paint-order: stroke; }
.md { font-size: 8px; fill: #5f6368; text-anchor: middle; }
.me { font-size: 8.200px; fill: #5c5138; }

/* Footer */
.footer { height: 129px; flex: none; background: #2b2b2b; padding-top: 50px; overflow: hidden; }
.social { display: flex; justify-content: center; gap: 13.500px; }
.soc { width: 37px; height: 37px; border-radius: 50%; background: #1a1a1a; display: flex; align-items: center; justify-content: center; }
.soc svg { width: 19px; height: 19px; }
.copy { margin-top: 21px; font-family: "Liberation Sans", Arial, sans-serif; font-size: 16.300px; line-height: 20px; color: #ccc; text-align: center; }
```
